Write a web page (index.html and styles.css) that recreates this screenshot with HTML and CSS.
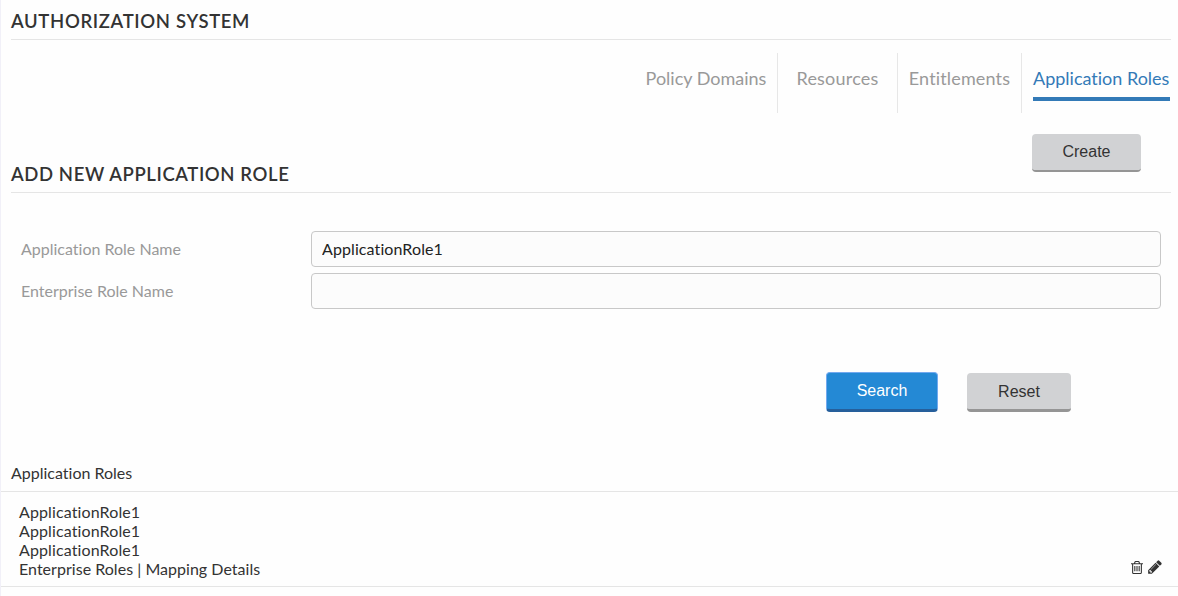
FILE: index.html
```html
<!DOCTYPE html>
<html lang="en">
<head>
<meta charset="utf-8">
<title>Authorization System</title>
<link rel="stylesheet" href="styles.css">
</head>
<body>
<main class="page">
  <h1 class="title">AUTHORIZATION SYSTEM</h1>
  <nav class="tabs">
    <a class="tab tab-policy"><span>Policy Domains</span></a>
    <a class="tab tab-resources"><span>Resources</span></a>
    <a class="tab tab-entitlements"><span>Entitlements</span></a>
    <a class="tab tab-active"><span>Application Roles</span></a>
  </nav>
  <header class="section-head">
    <h2 class="section-title">ADD NEW APPLICATION ROLE</h2>
    <button class="btn btn-create">Create</button>
  </header>
  <form class="form">
    <label class="label" for="app-role">Application Role Name</label>
    <input class="input" id="app-role" type="text" value="ApplicationRole1">
    <label class="label" for="ent-role">Enterprise Role Name</label>
    <input class="input" id="ent-role" type="text">
  </form>
  <div class="actions">
    <button class="btn btn-search">Search</button>
    <button class="btn btn-reset">Reset</button>
  </div>
  <h3 class="list-title">Application Roles</h3>
  <section class="result">
    <div class="details">
      <div class="role">ApplicationRole1</div>
      <div class="role">ApplicationRole1</div>
      <div class="role">ApplicationRole1</div>
      <div>Enterprise Roles | Mapping Details</div>
    </div>
    <div class="icons">
      <svg class="icon-trash" viewBox="0 0 1408 1792" aria-label="Delete"><path d="M512 800v576q0 14-9 23t-23 9h-64q-14 0-23-9t-9-23v-576q0-14 9-23t23-9h64q14 0 23 9t9 23zm256 0v576q0 14-9 23t-23 9h-64q-14 0-23-9t-9-23v-576q0-14 9-23t23-9h64q14 0 23 9t9 23zm256 0v576q0 14-9 23t-23 9h-64q-14 0-23-9t-9-23v-576q0-14 9-23t23-9h64q14 0 23 9t9 23zm128 724v-948h-896v948q0 22 7 40.500t14.500 27 10.500 8.500h832q3 0 10.500-8.500t14.500-27 7-40.500zm-672-1076h448l-48-117q-7-9-17-11h-317q-10 2-17 11zm928 32v64q0 14-9 23t-23 9h-96v948q0 83-47 143.500t-113 60.500h-832q-66 0-113-58.500t-47-141.500v-952h-96q-14 0-23-9t-9-23v-64q0-14 9-23t23-9h309l70-167q15-37 54-63t79-26h320q40 0 79 26t54 63l70 167h309q14 0 23 9t9 23z"/></svg>
      <svg class="icon-pencil" viewBox="0 0 1536 1792" aria-label="Edit"><path d="M363 1536l91-91-235-235-91 91v107h128v128zm523-928q0-22-22-22-10 0-17 7l-542 542q-7 7-7 17 0 22 22 22 10 0 17-7l542-542q7-7 7-17zm-54-192l416 416-832 832h-416v-416zm683 96q0 53-37 90l-166 166-416-416 166-165q36-38 90-38 53 0 91 38l235 234q37 39 37 91z"/></svg>
    </div>
  </section>
</main>
</body>
</html>
```
FILE: styles.css
```css
* { box-sizing: border-box; }
body {
  margin: 0;
  background: #fefefe;
  color: #333;
  font: 16px/19px Lato, sans-serif;
  font-variant-ligatures: none;
}
.page {
  height: 596px;
  border-left: 1px solid #f1f0f8;
  overflow: hidden;
}
.title, .section-title {
  margin: 0;
  font-size: 18.5px;
  font-weight: 600;
  line-height: 22px;
  letter-spacing: 0.65px;
}
.title {
  height: 40px;
  margin: 0 7px 0 10px;
  padding-top: 10px;
  border-bottom: 1px solid #e5e5e5;
}
.tabs {
  display: flex;
  justify-content: flex-end;
  height: 60px;
  margin: 13px 8px 0 0;
  font-size: 18px;
  line-height: 22px;
  color: #999;
}
.tab {
  display: flex;
  justify-content: center;
  padding-top: 14px;
  border-right: 1px solid #e7e7e7;
  white-space: nowrap;
}
.tab-policy { width: 143px; }
.tab-resources { width: 120px; letter-spacing: 0.2px; }
.tab-entitlements { width: 124px; letter-spacing: 0.15px; }
.tab-active { width: 148px; padding-left: 11px; border: 0; color: #337ab7; }
.tab-active span { width: 137px; height: 34px; border-bottom: 4px solid #337ab7; }
.section-head {
  display: flex;
  justify-content: space-between;
  height: 80px;
  margin: 0 7px 0 10px;
  padding-right: 30px;
  border-bottom: 1px solid #e5e5e5;
}
.section-title { padding-top: 50px; letter-spacing: 0.6px; }
.btn {
  height: 38px;
  padding: 0;
  border: 0;
  border-bottom: 2px solid #959595;
  border-radius: 4px;
  background: #d1d2d4;
  color: #333;
  font: 16px/34px "Liberation Sans", Arial, sans-serif;
}
.btn-create { width: 109px; margin-top: 21px; }
.form {
  display: grid;
  grid-template-columns: 290px 850px;
  row-gap: 6px;
  align-items: center;
  margin: 38px 0 0 20px;
}
.label { padding-bottom: 2px; color: #999; }
.input {
  width: 100%;
  height: 36px;
  padding: 0 10px 2px;
  border: 1px solid #c8c8c8;
  border-radius: 4px;
  background: #fcfcfc;
  color: #222;
  font: 16px Lato, sans-serif;
  font-variant-ligatures: none;
  letter-spacing: 0.1px;
}
.actions {
  display: flex;
  justify-content: flex-end;
  gap: 29px;
  margin: 63px 107px 0 0;
}
.btn-search {
  width: 112px;
  height: 40px;
  border: 1px solid #72a9ef;
  border-bottom: 3px solid #265f9b;
  background: #2489d5;
  color: #fff;
}
.btn-reset { width: 104px; height: 39px; margin-top: 1px; padding-top: 1px; border-bottom-width: 3px; }
.list-title {
  height: 80px;
  margin: 0;
  padding: 51px 0 0 10px;
  border-bottom: 1px solid #e5e5e5;
  font-size: 16px;
  font-weight: 400;
}
.result {
  display: flex;
  justify-content: space-between;
  align-items: flex-end;
  height: 95px;
  padding: 0 16px 8px 18px;
  border-bottom: 1px solid #e5e5e5;
}
.details { letter-spacing: 0.03px; }
.role { letter-spacing: 0.12px; }
.icons { display: flex; gap: 5px; padding-bottom: 3px; fill: #333; }
.icon-trash { width: 12px; height: 16px; }
.icon-pencil { width: 14px; height: 16px; }
```
